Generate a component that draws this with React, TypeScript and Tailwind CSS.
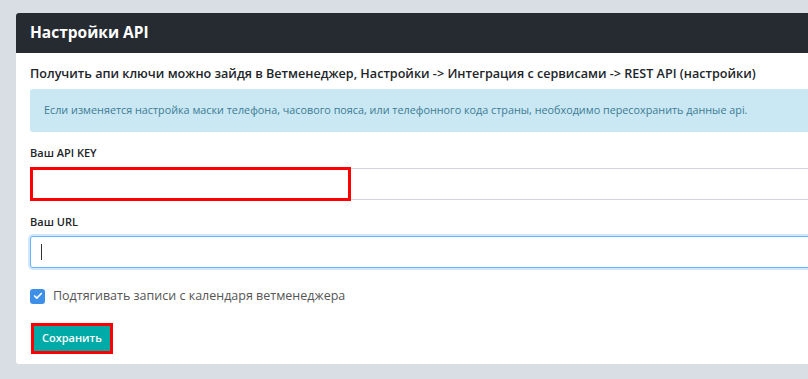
import { Check } from "lucide-react";

export default function App() {
  return (
    <div
      className="h-[379px] w-[808px] overflow-hidden bg-[#d9dee5] pt-[13px] pl-4"
      style={{ fontFamily: '"Open Sans", sans-serif' }}
    >
      <div className="w-[860px] rounded-tl-[3px] rounded-bl-[3px] bg-white">
        {/* header */}
        <div className="flex h-10 items-center rounded-tl-[3px] bg-[#262a31] px-[14px]">
          <h1 className="text-[15.5px] font-bold text-white">Настройки API</h1>
        </div>

        <div className="px-[14px] pt-[12px] pb-[10px]">
          <p className="text-[12.6px] font-semibold leading-[18px] text-[#212529]">
            Получить апи ключи можно зайдя в Ветменеджер, Настройки -&gt; Интеграция с сервисами -&gt; REST API (настройки)
          </p>

          <div className="mt-[6px] flex h-[43px] items-center rounded-[3px] bg-[#c9e8f3] px-[14px] text-[10.8px] text-[#3d7b93]">
            Если изменяется настройка маски телефона, часового пояса, или телефонного кода страны, необходимо пересохранить данные api.
          </div>

          <label className="mt-[13px] block text-[11px] font-semibold text-[#212529]">Ваш API KEY</label>
          <div className="relative mt-[6px]">
            <input className="block h-[32px] w-full rounded-[3px] border border-[#d1d5db] bg-white outline-none" />
            <div className="absolute top-[-1px] left-0 h-[34px] w-[321px] border-[3px] border-[#ff0000]" />
          </div>

          <label className="mt-[14px] block text-[11px] font-semibold text-[#212529]">Ваш URL</label>
          <div className="mt-[6px] flex h-[32px] w-full items-center rounded-[3px] border border-[#66b3ff] bg-white px-[10px] shadow-[0_0_0_2px_rgba(102,179,255,0.3)]">
            <span className="h-[16px] w-px bg-[#333]" />
          </div>

          <div className="mt-[19px] flex items-center gap-[8px]">
            <span className="flex h-[15px] w-[15px] items-center justify-center rounded-[3px] bg-[#3d8fe8]">
              <Check className="h-[10px] w-[10px] text-white" strokeWidth={4} />
            </span>
            <span className="text-[12.5px] text-[#555]">Подтягивать записи с календаря ветменеджера</span>
          </div>

          <div className="mt-[17px] ml-px inline-block border-[3px] border-[#ff0000]">
            <button className="block h-[25px] bg-[#00aaa6] px-[8px] text-[11px] font-semibold text-white">
              Сохранить
            </button>
          </div>
        </div>
      </div>
    </div>
  );
}
